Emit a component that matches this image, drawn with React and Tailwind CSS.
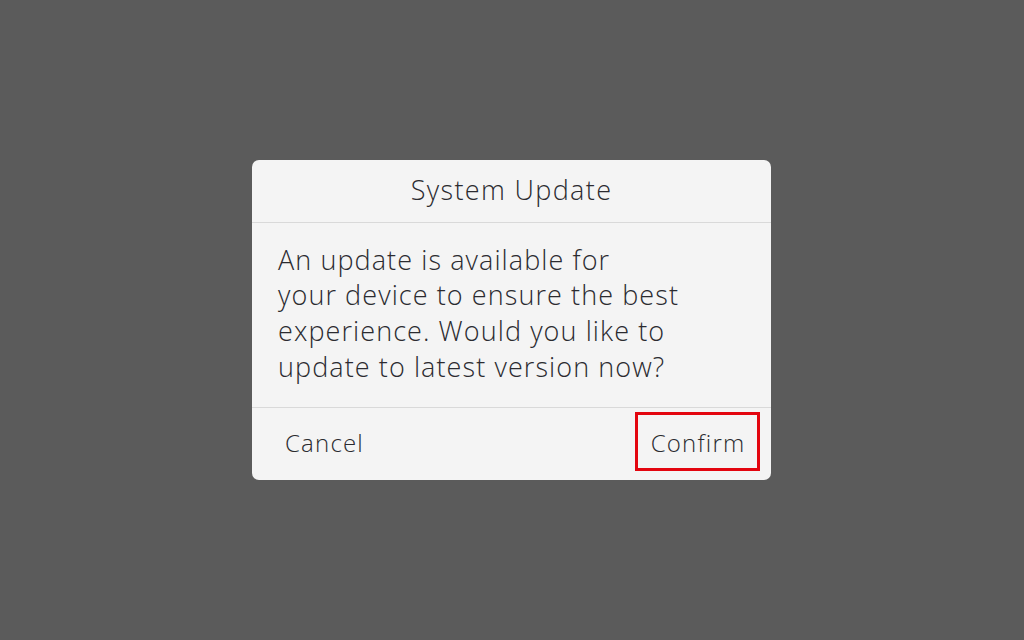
export default function App() {
  return (
    <div className="w-[1024px] h-[640px] bg-[#5b5b5b] flex items-center justify-center" style={{ fontFamily: '"Open Sans", "Noto Sans", sans-serif' }}>
      <div className="w-[519px] h-[320px] mt-[-1px] ml-[-1px] bg-[#f4f4f4] rounded-[7px] flex flex-col text-[#2b2b30]">
        <div className="h-[63px] flex items-center justify-center border-b border-[#d9d9d9] text-[27px] tracking-[0.05em] font-[350]">
          System Update
        </div>
        <div className="flex-1 px-[26px] pt-[19px] text-[27px] leading-[35.7px] tracking-[0.04em] font-[350] border-b border-[#d9d9d9]">
          An update is available for<br />
          your device to ensure the best<br />
          experience. Would you like to<br />
          update to latest version now?
        </div>
        <div className="h-[72px] flex items-start justify-between pl-[33px] pr-[11px] text-[24px] tracking-[0.05em] font-[350]">
          <span className="mt-[17px]">Cancel</span>
          <div className="mt-[4px] w-[125px] h-[59px] border-[3px] border-[#e3050f] flex items-center justify-center pl-[1px] pt-[4px]">
            Confirm
          </div>
        </div>
      </div>
    </div>
  );
}
